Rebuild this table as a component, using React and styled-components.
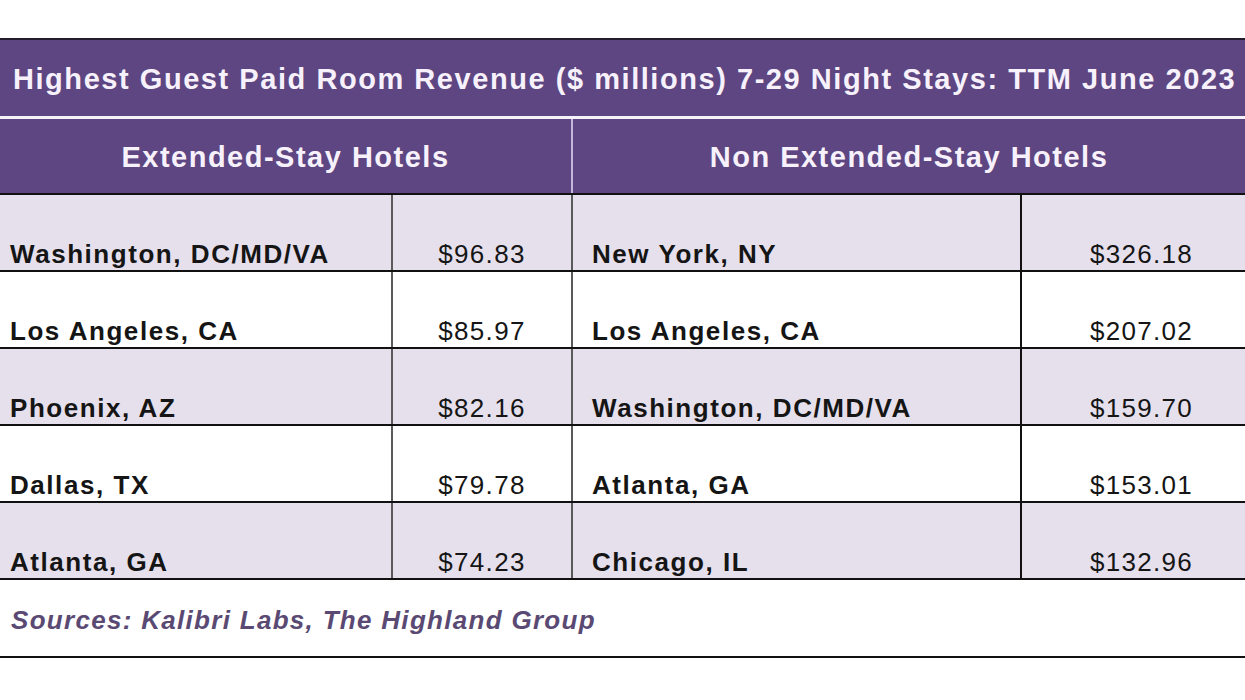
import React from "react";
import styled, { createGlobalStyle } from "styled-components";

const GlobalStyle = createGlobalStyle`
  body {
    margin: 0;
    background: #ffffff;
    font-family: "Liberation Sans", Arial, sans-serif;
  }
`;

const Page = styled.div`
  width: 1245px;
  height: 700px;
  padding-top: 38px;
  box-sizing: border-box;
  overflow: hidden;
`;

const Table = styled.div`
  border-top: 2px solid #231c2c;
`;

const TitleRow = styled.div`
  height: 74px;
  background: #5d4681;
  border-bottom: 3px solid #f6f2fa;
  display: flex;
  align-items: center;
  padding: 2px 0 0 13px;
  color: #f7f1fb;
  font-size: 29px;
  font-weight: 700;
  letter-spacing: 1.55px;
  white-space: nowrap;
`;

const SubHeader = styled.div`
  display: grid;
  grid-template-columns: 571px 1fr;
  height: 74px;
  background: #5d4681;
  border-bottom: 2px solid #111;
`;

const SubCell = styled.div`
  display: flex;
  align-items: center;
  justify-content: center;
  color: #f7f1fb;
  font-size: 29px;
  font-weight: 700;
  letter-spacing: 1.5px;
  padding-top: 2px;
  border-left: ${(p) => (p.$divided ? "2px solid #c6b6dc" : "none")};
`;

const Row = styled.div`
  display: grid;
  grid-template-columns: 391px 180px 449px 1fr;
  height: 75px;
  background: ${(p) => (p.$shaded ? "#e6e0ed" : "#ffffff")};
  border-bottom: 2px solid #111;
`;

const Cell = styled.div`
  display: flex;
  align-items: flex-end;
  justify-content: ${(p) => (p.$num ? "center" : "flex-start")};
  padding: 0 0 0 ${(p) => p.$indent || "0"};
  font-size: 26px;
  font-weight: ${(p) => (p.$num ? 400 : 700)};
  letter-spacing: ${(p) => (p.$num ? "1.3px" : "1.55px")};
  color: #151515;
  white-space: nowrap;
  border-left: ${(p) => p.$line || "none"};
`;

const SourceRow = styled.div`
  height: 72px;
  border-bottom: 2px solid #111;
  display: flex;
  align-items: center;
  padding: 4px 0 0 11px;
  color: #5a4a73;
  font-size: 26px;
  font-weight: 700;
  font-style: italic;
  letter-spacing: 1.3px;
`;

const rows = [
  ["Washington, DC/MD/VA", "$96.83", "New York, NY", "$326.18"],
  ["Los Angeles, CA", "$85.97", "Los Angeles, CA", "$207.02"],
  ["Phoenix, AZ", "$82.16", "Washington, DC/MD/VA", "$159.70"],
  ["Dallas, TX", "$79.78", "Atlanta, GA", "$153.01"],
  ["Atlanta, GA", "$74.23", "Chicago, IL", "$132.96"],
];

export default function App() {
  return (
    <Page>
      <GlobalStyle />
      <Table>
        <TitleRow>
          Highest Guest Paid Room Revenue ($ millions) 7-29 Night Stays: TTM June 2023
        </TitleRow>
        <SubHeader>
          <SubCell>Extended-Stay Hotels</SubCell>
          <SubCell $divided>Non Extended-Stay Hotels</SubCell>
        </SubHeader>
        {rows.map((r, i) => (
          <Row key={i} $shaded={i % 2 === 0}>
            <Cell $indent="10px">{r[0]}</Cell>
            <Cell $num $line="2px solid #5a5a5a">{r[1]}</Cell>
            <Cell $indent="19px" $line="2px solid #5a5a5a">{r[2]}</Cell>
            <Cell $num $indent="16px" $line="2px solid #111">{r[3]}</Cell>
          </Row>
        ))}
        <SourceRow>Sources: Kalibri Labs, The Highland Group</SourceRow>
      </Table>
    </Page>
  );
}
